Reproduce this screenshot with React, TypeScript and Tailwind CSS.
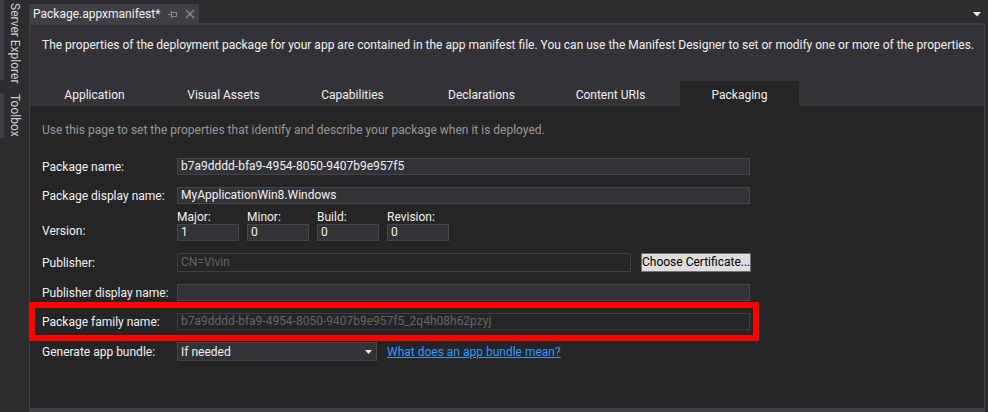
import React from "react";

const tabs = ["Application", "Visual Assets", "Capabilities", "Declarations", "Content URIs", "Packaging"];

function Box({
    value,
    width,
    disabled,
    tall,
}: {
    value?: string;
    width: string;
    disabled?: boolean;
    tall?: boolean;
}) {
    return (
        <div
            className={`${width} ${tall ? "h-[19px] leading-[17px]" : "h-[17px] leading-[15px]"} ${
                disabled ? "border-[#3f3f46] bg-[#252526] text-[#656565]" : "border-[#46464a] bg-[#333337] text-[#f1f1f1]"
            } overflow-hidden whitespace-nowrap border pl-[3px]`}
        >
            {value}
        </div>
    );
}

function Row({ label, children }: { label: string; children: React.ReactNode }) {
    return (
        <div className="flex items-center">
            <div className="w-[135px] shrink-0">{label}</div>
            {children}
        </div>
    );
}

export default function App() {
    return (
        <div className="flex h-[412px] w-[988px] overflow-hidden bg-[#2d2d30] font-[family-name:Roboto,sans-serif] text-[12px] leading-[16px] text-[#f1f1f1]">
            {/* Auto-hidden tool windows */}
            <div className="flex w-[29px] shrink-0 flex-col">
                <div className="flex h-[80px]">
                    <div className="w-[4px] bg-[#3f3f46]" />
                    <div className="whitespace-nowrap pl-[3px] pt-[3px] text-[#d0d0d0] [writing-mode:vertical-rl]">Server Explorer</div>
                </div>
                <div className="mt-[13px] flex h-[45px]">
                    <div className="w-[4px] bg-[#3f3f46]" />
                    <div className="whitespace-nowrap pl-[3px] pt-[1px] text-[#d0d0d0] [writing-mode:vertical-rl]">Toolbox</div>
                </div>
            </div>

            <div className="flex flex-1 flex-col pr-[3px]">
                {/* Document tab strip */}
                <div className="flex h-[23px] shrink-0 items-end justify-between">
                    <div className="flex h-[19px] w-[170px] items-center bg-[#3f3f46] pl-[4px]">
                        <span>Package.appxmanifest*</span>
                        <svg className="ml-[8px]" width="10" height="10" viewBox="0 0 10 10" fill="none" stroke="#8c8c90" strokeWidth="1">
                            <path d="M0 5.5h3M3.5 2v7M3.5 3.5h5v4h-5" />
                        </svg>
                        <svg className="ml-[7px]" width="10" height="10" viewBox="0 0 10 10" fill="none" stroke="#8c8c90" strokeWidth="1.4">
                            <path d="M1 1l8 8M9 1l-8 8" />
                        </svg>
                    </div>
                    <svg className="mb-[6px] mr-[4px]" width="8" height="5" viewBox="0 0 8 5">
                        <path d="M0 0h8L4 4.5z" fill="#f1f1f1" />
                    </svg>
                </div>

                <div className="flex flex-1 flex-col border-x border-b-4 border-t-2 border-[#3f3f46]">
                    <div className="h-[56px] shrink-0 whitespace-nowrap bg-[#333337] pl-[12px] pt-[12px]">
                        The properties of the deployment package for your app are contained in the app manifest file. You can use the Manifest Designer to set or modify one or more of the properties.
                    </div>

                    <div className="flex h-[25px] shrink-0 gap-[10px] bg-[#333337] pl-[5px]">
                        {tabs.map((t) => (
                            <div
                                key={t}
                                className={`flex w-[119px] items-center justify-center pt-[2px] ${t === "Packaging" ? "bg-[#252526]" : ""}`}
                            >
                                {t}
                            </div>
                        ))}
                    </div>

                    <div className="flex flex-1 flex-col bg-[#252526] pl-[12px] pt-[16px]">
                        <p className="text-[#999999]">
                            Use this page to set the properties that identify and describe your package when it is deployed.
                        </p>

                        <div className="mt-[20px]">
                            <Row label="Package name:">
                                <Box width="w-[573px]" value="b7a9dddd-bfa9-4954-8050-9407b9e957f5" />
                            </Row>
                        </div>

                        <div className="mt-[12px]">
                            <Row label="Package display name:">
                                <Box width="w-[573px]" value="MyApplicationWin8.Windows" />
                            </Row>
                        </div>

                        <div className="mt-[6px] flex items-end">
                            <div className="mb-[2px] w-[135px] shrink-0">Version:</div>
                            <div className="flex gap-[8px]">
                                {[
                                    ["Major:", "1"],
                                    ["Minor:", "0"],
                                    ["Build:", "0"],
                                    ["Revision:", "0"],
                                ].map(([l, v]) => (
                                    <div key={l} className="flex w-[62px] flex-col">
                                        <div className="h-[14px] leading-[14px]">{l}</div>
                                        <Box width="w-[62px]" value={v} />
                                    </div>
                                ))}
                            </div>
                        </div>

                        <div className="mt-[12px]">
                            <Row label="Publisher:">
                                <Box width="w-[454px]" value="CN=Vivin" disabled tall />
                                <button className="ml-[10px] h-[19px] w-[110px] whitespace-nowrap border border-[#707070] bg-[#dddddd] px-0 text-[12px] leading-[17px] text-black">
                                    Choose Certificate...
                                </button>
                            </Row>
                        </div>

                        <div className="mt-[12px]">
                            <Row label="Publisher display name:">
                                <Box width="w-[573px]" />
                            </Row>
                        </div>

                        <div className="relative mt-[12px] w-[708px]">
                            <Row label="Package family name:">
                                <Box width="w-[573px]" value="b7a9dddd-bfa9-4954-8050-9407b9e957f5_2q4h08h62pzyj" disabled />
                            </Row>
                            <div className="absolute -bottom-[11px] -left-[13px] -right-[9px] -top-[11px] border-[6px] border-[#ff0000]" />
                        </div>

                        <div className="mt-[12px]">
                            <Row label="Generate app bundle:">
                                <div className="flex h-[19px] w-[200px] items-center justify-between border border-[#46464a] bg-[#333337] pl-[3px] pr-[4px]">
                                    <span>If needed</span>
                                    <svg width="7" height="4" viewBox="0 0 7 4">
                                        <path d="M0 0h7L3.5 4z" fill="#f1f1f1" />
                                    </svg>
                                </div>
                                <a className="ml-[10px] text-[#3399ff] underline">What does an app bundle mean?</a>
                            </Row>
                        </div>
                    </div>
                </div>
            </div>
        </div>
    );
}
